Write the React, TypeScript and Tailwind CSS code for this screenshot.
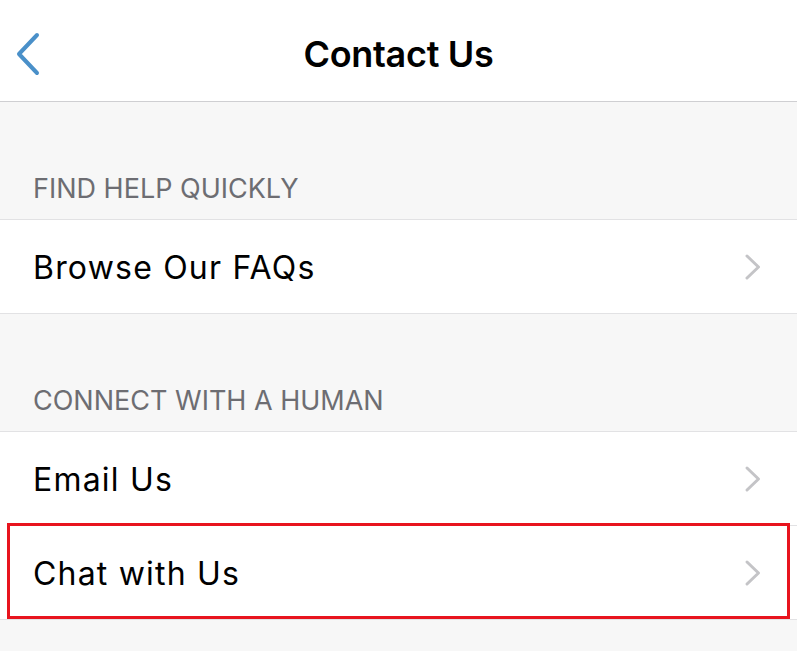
import React from 'react';

const font = { fontFamily: 'Inter, "Noto Sans", sans-serif' };

const Chevron: React.FC = () => (
  <svg width="18" height="28" viewBox="0 0 18 28" fill="none" className="flex-none">
    <path d="M3 3 L14.5 14 L3 25" stroke="#c4c4c7" strokeWidth="3" strokeLinecap="round" strokeLinejoin="round" />
  </svg>
);

const Row: React.FC<{ label: string; divider?: boolean; highlight?: boolean }> = ({ label, divider, highlight }) => (
  <div className="relative bg-white">
    <div className="flex items-center h-[93px] pl-[33px] pr-[35px]">
      <span className="flex-1 text-[32px] text-black tracking-[1.2px] pt-[2px]">{label}</span>
      <Chevron />
    </div>
    {divider && <div className="ml-[33px] h-px bg-[#e2e2e4]" />}
    {highlight && (
      <span className="absolute left-[7px] right-[7px] top-[-3px] bottom-0 border-[3px] border-[#e8141e] pointer-events-none" />
    )}
  </div>
);

const SectionHeader: React.FC<{ title: string }> = ({ title }) => (
  <div className="h-[118px] flex items-end pl-[33px] pb-[17px] border-b border-[#e2e2e4]">
    <span className="text-[27px] text-[#6d6d72] tracking-[0px] leading-none">{title}</span>
  </div>
);

const App: React.FC = () => {
  return (
    <div className="min-h-screen bg-[#f7f7f7]" style={font}>
      {/* Nav bar */}
      <header className="h-[102px] bg-white border-b border-[#cfcfd2] flex items-center px-[15px] pt-[6px]">
        <svg width="26" height="44" viewBox="0 0 26 44" fill="none" className="flex-none">
          <path d="M22 3 L4 22 L22 41" stroke="#4a90c9" strokeWidth="4" strokeLinecap="round" strokeLinejoin="round" />
        </svg>
        <h1 className="flex-1 text-center text-[36px] font-semibold text-black mr-[26px] tracking-[-0.3px]">Contact Us</h1>
      </header>

      <SectionHeader title="FIND HELP QUICKLY" />
      <div className="border-b border-[#e2e2e4]">
        <Row label="Browse Our FAQs" />
      </div>

      <SectionHeader title="CONNECT WITH A HUMAN" />
      <div className="border-b border-[#e2e2e4]">
        <Row label="Email Us" divider />
        <Row label="Chat with Us" highlight />
      </div>
    </div>
  );
};

export default App;
